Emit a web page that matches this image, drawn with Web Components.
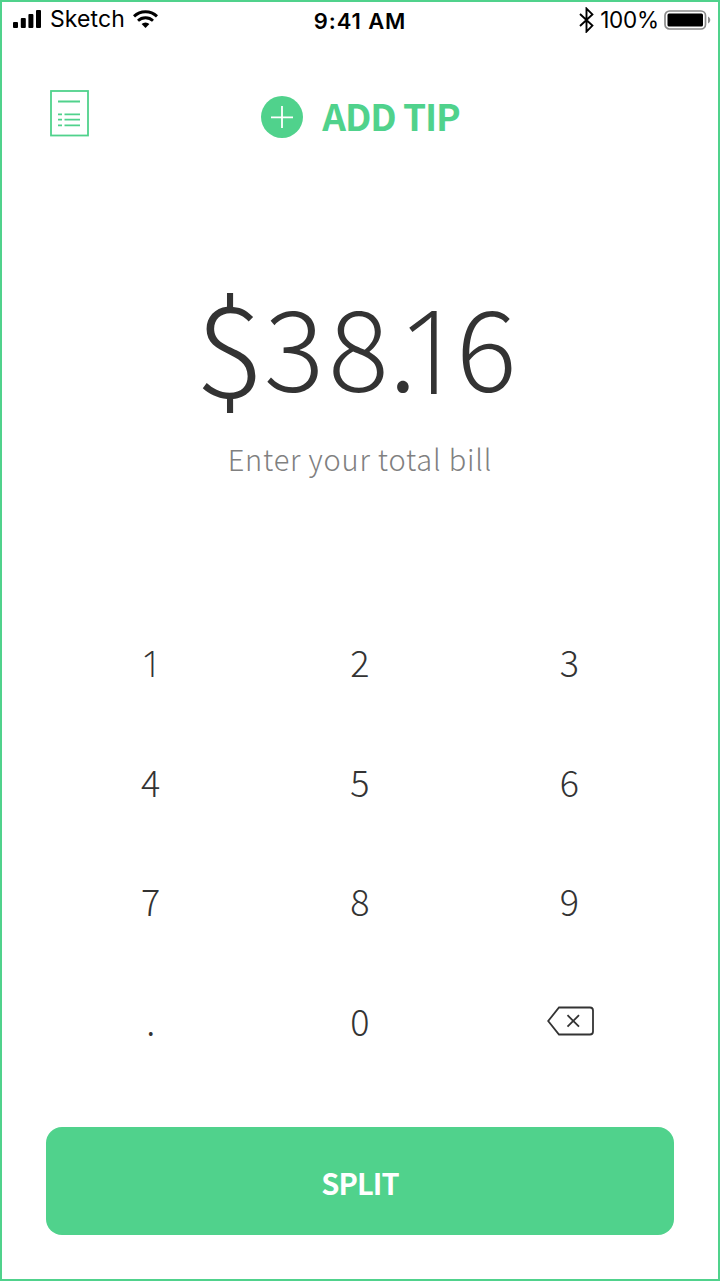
<!DOCTYPE html>
<html lang="en">
<head>
<meta charset="utf-8">
<title>Split bill</title>
<style>
    body{
        margin: 0;
        background: #fff;
    }
</style>
</head>
<body>
<bill-screen>
    <status-bar slot="status" carrier="Sketch" time="9:41 AM" battery="100%"></status-bar>
    <tip-header slot="header">ADD TIP</tip-header>
    <bill-amount slot="amount" value="$38.16">Enter your total bill</bill-amount>
    <key-pad slot="keys"></key-pad>
    <main-button slot="action">SPLIT</main-button>
</bill-screen>

<script>
function define(name, markup, setup){
    const html = document.createElement("template");
    html.innerHTML = markup;
    customElements.define(name, class extends HTMLElement{
        constructor(){
            super();
            this.attachShadow({mode:"open"});
            this.shadowRoot.appendChild(html.content.cloneNode(true));
            if(setup) setup(this, this.shadowRoot);
        }
    });
}

define("bill-screen", `
    <style>
        :host{
            --green: #50d28c;
            --ink: #333;
            display: grid;
            grid-template-rows: 36px 158px 405px 485px 1fr;
            box-sizing: border-box;
            width: 720px;
            height: 1281px;
            border: 2px solid var(--green);
            font-family: "Noto Sans CJK SC", "Noto Sans", sans-serif;
            color: var(--ink);
        }
    </style>
    <slot name="status"></slot>
    <slot name="header"></slot>
    <slot name="amount"></slot>
    <slot name="keys"></slot>
    <slot name="action"></slot>
`);

define("status-bar", `
    <style>
        :host{
            display: grid;
            grid-template-columns: 1fr auto 1fr;
            align-items: start;
            height: 36px;
            padding: 0 7px 0 11px;
            font: 400 23px/34px Inter, sans-serif;
            color: #000;
        }
        .left, .right{
            display: flex;
            align-items: center;
            height: 34px;
        }
        .right{
            justify-content: flex-end;
            height: 35px;
        }
        svg{
            display: block;
            flex: none;
        }
        .carrier{
            margin: 0 8px 0 9px;
            letter-spacing: 0.1px;
        }
        .time{
            padding-right: 4px;
            font-weight: 600;
            font-size: 22px;
            line-height: 38px;
            letter-spacing: 0.9px;
        }
        .battery{
            margin: 0 5px 0 6px;
            font-size: 22.5px;
            line-height: 35px;
            letter-spacing: -0.2px;
        }
    </style>
    <div class="left">
        <svg width="28" height="18" viewBox="0 0 28 18">
            <rect x="0" y="12" width="5" height="6" rx="1"/>
            <rect x="7.8" y="8" width="5" height="10" rx="1"/>
            <rect x="15.4" y="4" width="5" height="14" rx="1"/>
            <rect x="23" y="0" width="5" height="18" rx="1"/>
        </svg>
        <span class="carrier"></span>
        <svg width="25" height="18" viewBox="0 0 25 18">
            <path d="M1 6.4a16.5 16.5 0 0 1 23 0" fill="none" stroke="#000" stroke-width="3"/>
            <path d="M5 10.8a10.7 10.7 0 0 1 15 0" fill="none" stroke="#000" stroke-width="2.8"/>
            <path d="M8.6 14.1a5.8 5.8 0 0 1 7.8 0L12.5 18z"/>
        </svg>
    </div>
    <span class="time"></span>
    <div class="right">
        <svg width="15" height="26" viewBox="0 0 15 26">
            <path d="M1 7l12.4 11.6L7.5 24.6V1.6l5.9 5.8L1 19" fill="none" stroke="#000" stroke-width="1.9"/>
        </svg>
        <span class="battery"></span>
        <svg width="47" height="20" viewBox="0 0 47 20">
            <rect x="1" y="1" width="40.5" height="18" rx="4.5" fill="none" stroke="#8a8a8a" stroke-width="1.7"/>
            <rect x="3.5" y="3.5" width="35.5" height="13" rx="1.5"/>
            <path d="M44 6.5c3 1.5 3 5.5 0 7z" fill="#8a8a8a"/>
        </svg>
    </div>
`, (el, root) => {
    root.querySelector(".carrier").textContent = el.getAttribute("carrier");
    root.querySelector(".time").textContent = el.getAttribute("time");
    root.querySelector(".battery").textContent = el.getAttribute("battery");
});

define("tip-header", `
    <style>
        :host{
            display: grid;
            grid-template-columns: 1fr auto 1fr;
            align-items: start;
            padding: 52px 47px 0 48px;
            color: var(--green);
        }
        svg{
            display: block;
        }
        .tip{
            display: flex;
            align-items: center;
            gap: 19px;
            height: 42px;
            margin-top: 6px;
            font-size: 37px;
            font-weight: 700;
            line-height: 42px;
            letter-spacing: -1.1px;
        }
        .label{
            padding-bottom: 4px;
        }
    </style>
    <svg width="39" height="47" viewBox="0 0 39 47" fill="none" stroke="currentColor" stroke-width="1.8">
        <rect x="1" y="1" width="37" height="44.5"/>
        <path d="M8 11.5h22M8 24.3h4m2.5 0H30M8 29.7h4m2.5 0H30M8 35.3h4m2.5 0H30"/>
    </svg>
    <div class="tip">
        <svg width="42" height="42" viewBox="0 0 42 42">
            <circle cx="21" cy="21" r="21" fill="currentColor"/>
            <path d="M10 21.3h22M21 10v22" stroke="#fff" stroke-width="1.8"/>
        </svg>
        <span class="label"><slot></slot></span>
    </div>
`);

define("bill-amount", `
    <style>
        :host{
            display: flex;
            flex-direction: column;
            align-items: center;
            padding-top: 77px;
        }
        .value{
            display: flex;
            font-size: 113px;
            font-weight: 300;
            line-height: 140px;
            height: 140px;
        }
        /* tall currency sign, the rest is kerning */
        .dollar{
            transform: translateX(-4px) scale(1.15, 1.11);
        }
        .eight{
            margin-left: 4px;
        }
        .dot{
            letter-spacing: -19px;
        }
        /* flat "1" without a foot */
        .one{
            font-family: "Open Sans", sans-serif;
            font-size: 116px;
            line-height: 152px;
            letter-spacing: -8px;
        }
        .hint{
            margin-top: 25px;
            font-size: 29px;
            font-weight: 300;
            line-height: 40px;
            letter-spacing: 0.8px;
            color: #808080;
        }
    </style>
    <div class="value"></div>
    <div class="hint"><slot></slot></div>
`, (el, root) => {
    const names = {"$": "dollar", "8": "eight", ".": "dot", "1": "one"};
    for(const char of el.getAttribute("value")){
        const span = document.createElement("span");
        span.className = names[char] || "";
        span.textContent = char;
        root.querySelector(".value").appendChild(span);
    }
});

define("pad-key", `
    <style>
        :host{
            display: flex;
            align-items: center;
            justify-content: center;
            font-size: 36px;
            font-weight: 300;
            line-height: 40px;
        }
        :host([flat]){
            padding: 4px 0 0 2px;
            font-family: "Open Sans", sans-serif;
            font-size: 37px;
        }
    </style>
    <slot></slot>
`);

define("key-pad", `
    <style>
        :host{
            display: grid;
            grid-template-columns: repeat(3, 1fr);
            grid-template-rows: repeat(4, 119.7px);
            padding: 0 44px;
        }
        svg{
            display: block;
            margin: 3px 0 0 2px;
        }
    </style>
    <pad-key flat>1</pad-key><pad-key>2</pad-key><pad-key>3</pad-key>
    <pad-key>4</pad-key><pad-key>5</pad-key><pad-key>6</pad-key>
    <pad-key>7</pad-key><pad-key>8</pad-key><pad-key>9</pad-key>
    <pad-key>.</pad-key><pad-key>0</pad-key>
    <pad-key>
        <svg width="47" height="30" viewBox="0 0 47 30" fill="none" stroke="#333" stroke-width="1.8">
            <path d="M12 1.5h31a3 3 0 0 1 3 3v21a3 3 0 0 1-3 3H12L1.2 15z"/>
            <path d="M20.5 9.2l11.500 11.500M32 9.2L20.500 20.700"/>
        </svg>
    </pad-key>
`);

define("main-button", `
    <style>
        :host{
            display: block;
            padding: 41px 44px 0;
        }
        button{
            display: block;
            width: 100%;
            height: 108px;
            padding: 2px 0 0;
            border: 0;
            border-radius: 16px;
            background: var(--green);
            color: #fff;
            font: inherit;
            font-size: 29px;
            font-weight: 700;
            letter-spacing: -0.9px;
        }
    </style>
    <button><slot></slot></button>
`);
</script>
</body>
</html>
